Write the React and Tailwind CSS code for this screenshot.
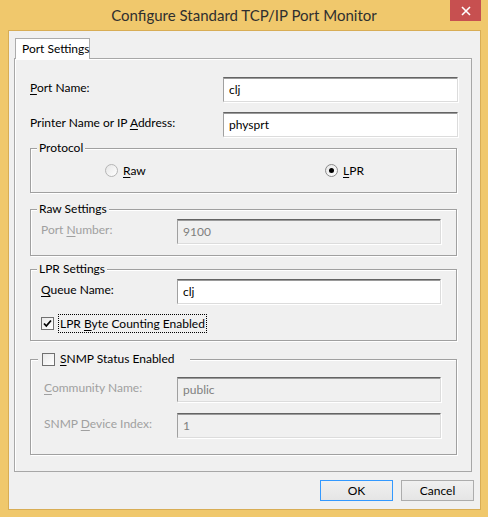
import React from 'react';

const U = ({ children }) => <span className="underline underline-offset-[2px] decoration-[1px]">{children}</span>;

function Field({ value, disabled, className = '' }) {
  return (
    <div
      className={`h-[25px] flex items-center pl-[5px] border border-t-[#646464] border-l-[#a0a0a0] border-r-[#dcdcdc] border-b-[#dcdcdc] shadow-[inset_0_1px_0_#9a9a9a,1px_1px_0_#fff] ${
        disabled ? 'bg-[#f0f0f0] text-[#7f7f7f]' : 'bg-white text-black'
      } ${className}`}
    >
      {value}
    </div>
  );
}

function Group({ label, className = '', children }) {
  return (
    <div className={`relative border border-[#a0a0a0] shadow-[inset_1px_1px_0_#fff,1px_1px_0_#fff] ${className}`}>
      {label && <div className="absolute left-[6px] top-[-9px] px-[2px] bg-[#f0f0f0] leading-[16px]">{label}</div>}
      {children}
    </div>
  );
}

function Radio({ checked }) {
  return (
    <span
      className={`w-[13px] h-[13px] rounded-full border bg-gradient-to-br from-[#e6e6e6] to-white flex items-center justify-center ${
        checked ? 'border-[#8a8a8a]' : 'border-[#b5b5b5]'
      }`}
    >
      {checked && <span className="w-[5px] h-[5px] rounded-full bg-black" />}
    </span>
  );
}

function Check({ checked }) {
  return (
    <span className="w-[13px] h-[13px] border border-[#707070] bg-gradient-to-br from-[#e9e9e9] to-white flex items-center justify-center">
      {checked && (
        <svg width="9" height="9" viewBox="0 0 9 9">
          <path d="M1 4.5 L3.3 7 L8 1.5" fill="none" stroke="#000" strokeWidth="1.8" />
        </svg>
      )}
    </span>
  );
}

export default function App() {
  return (
    <div className="w-[488px] h-[517px] bg-[#f0c86c] flex flex-col font-['Lato',sans-serif] text-[12px] text-black leading-[16px]">
      {/* title bar */}
      <div className="h-[30px] flex pr-[7px]">
        <div className="w-[38px]" />
        <div className="flex-1 text-center text-[15px] leading-[30px] text-[#2f2f2f]">Configure Standard TCP/IP Port Monitor</div>
        <button type="button" className="w-[31px] h-[21px] bg-[#c75050] flex items-center justify-center">
          <svg width="10" height="10" viewBox="0 0 10 10">
            <path d="M1 1 L9 9 M9 1 L1 9" stroke="#fff" strokeWidth="1.6" />
          </svg>
        </button>
      </div>

      {/* client area */}
      <div className="ml-[8px] w-[473px] h-[480px] bg-[#f0f0f0] border border-[#d8ad55] pl-[5px] pt-[7px]">
        <div className="flex h-[21px]">
          <div className="ml-[1px] w-[75px] h-[21px] bg-white border border-b-0 border-[#acacac] relative z-10 pl-[6px] pt-[2px] whitespace-nowrap">
            Port Settings
          </div>
        </div>
        <div className="-mt-[1px] w-[458px] h-[414px] border border-[#a7a7a7] shadow-[inset_1px_1px_0_#fff] pt-[18px] pl-[15px] pr-[13px]">
          <div className="flex items-center h-[25px]">
            <div className="w-[193px] -mt-[3px]"><U>P</U>ort Name:</div>
            <Field value="clj" className="w-[235px]" />
          </div>
          <div className="flex items-center h-[25px] mt-[10px]">
            <div className="w-[193px] -mt-[3px]">Printer Name or IP <U>A</U>ddress:</div>
            <Field value="physprt" className="w-[235px]" />
          </div>

          <Group label="Protocol" className="mt-[11px] w-[427px] h-[45px] flex items-center">
            <div className="ml-[74px] w-[220px] flex items-center gap-[5px]">
              <Radio />
              <span><U>R</U>aw</span>
            </div>
            <div className="flex items-center gap-[5px]">
              <Radio checked />
              <span><U>L</U>PR</span>
            </div>
          </Group>

          <Group label="Raw Settings" className="mt-[16px] w-[427px] h-[47px] pt-[9px] pl-[10px]">
            <div className="flex items-center h-[25px] text-[#a0a0a0]">
              <div className="w-[136px] -mt-[3px]">Port <U>N</U>umber:</div>
              <Field value="9100" disabled className="w-[264px]" />
            </div>
          </Group>

          <Group label="LPR Settings" className="mt-[13px] w-[427px] h-[72px] pt-[9px] pl-[10px]">
            <div className="flex items-center h-[25px]">
              <div className="w-[136px] -mt-[3px]"><U>Q</U>ueue Name:</div>
              <Field value="clj" className="w-[264px]" />
            </div>
            <div className="flex items-center h-[19px] mt-[10px] gap-[4px]">
              <Check checked />
              <span className="border border-dotted border-black px-[1px] h-[19px] leading-[17px] whitespace-nowrap">
                LPR <U>B</U>yte Counting Enabled
              </span>
            </div>
          </Group>

          <Group className="mt-[18px] w-[427px] h-[96px] pt-[17px] pl-[13px]">
            <div className="absolute left-[7px] top-[-9px] w-[152px] h-[16px] bg-[#f0f0f0] flex items-center gap-[5px] pl-[4px]">
              <Check />
              <span className="whitespace-nowrap"><U>S</U>NMP Status Enabled</span>
            </div>
            <div className="flex items-center h-[25px] text-[#a0a0a0]">
              <div className="w-[133px] -mt-[3px]"><U>C</U>ommunity Name:</div>
              <Field value="public" disabled className="w-[264px]" />
            </div>
            <div className="flex items-center h-[25px] mt-[11px] text-[#a0a0a0]">
              <div className="w-[133px] -mt-[3px]">SNMP <U>D</U>evice Index:</div>
              <Field value="1" disabled className="w-[264px]" />
            </div>
          </Group>
        </div>

        <div className="flex justify-end gap-[8px] mt-[8px] pr-[6px]">
          <button type="button" className="w-[73px] h-[21px] border border-[#3399ff] bg-gradient-to-b from-[#f0f0f0] to-[#e5e5e5]">OK</button>
          <button type="button" className="w-[73px] h-[21px] border border-[#acacac] bg-gradient-to-b from-[#f0f0f0] to-[#e5e5e5]">Cancel</button>
        </div>
      </div>
    </div>
  );
}
